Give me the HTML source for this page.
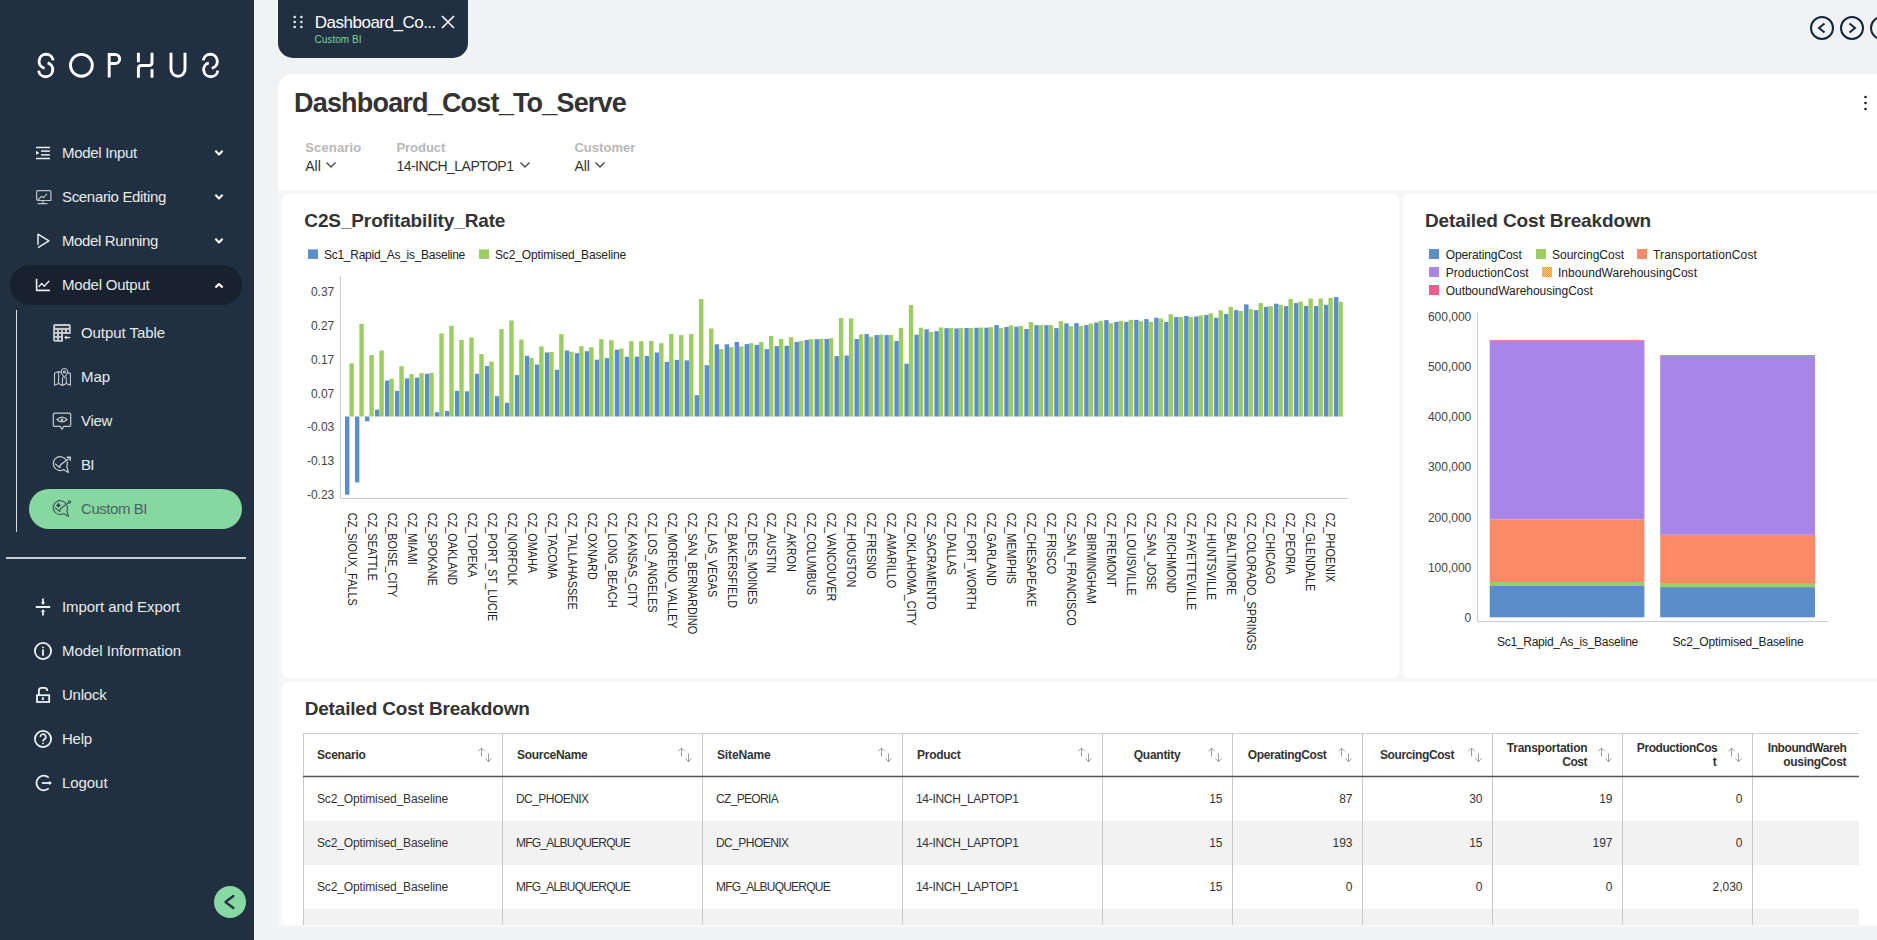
<!DOCTYPE html>
<html><head><meta charset="utf-8"><title>Dashboard_Cost_To_Serve</title>
<style>
html,body{margin:0;padding:0;}
body{width:1877px;height:940px;overflow:hidden;position:relative;background:#f1f2f4;font-family:"Liberation Sans",sans-serif;}
.t{position:absolute;white-space:nowrap;line-height:1;}
svg{overflow:visible}
</style></head><body>
<div style="position:absolute;left:0;top:0;width:254px;height:940px;background:#213040"></div><svg style="position:absolute;left:0;top:0" width="254" height="100" viewBox="0 0 254 100">
<g fill="none" stroke="#fff" stroke-width="2.9" stroke-linecap="butt">
<path d="M53.2,60.4 A7.1,7.1 0 1 0 44.6,68.3"/>
<path d="M38.6,70.6 A7.1,7.1 0 1 0 47.6,62.8"/>
<circle cx="81.4" cy="65.3" r="10.9"/>
<path d="M109.2,77.6 V54.5 H115.2 A4.5,4.5 0 0 1 115.2,63.5 H109.2"/>
<path d="M138.4,52.8 V62.2"/>
<path d="M152,52.8 V62.5 Q152,65.5 149,65.5 H141.4 Q138.4,65.5 138.4,68.5 V77.8"/>
<path d="M152,69.2 V77.8"/>
<path d="M171,52.8 V69.3 A7,7 0 0 0 185,69.3 V52.8"/>
<path d="M203.2,60.4 A7.1,7.1 0 1 1 211.8,68.3"/>
<path d="M217.8,70.6 A7.1,7.1 0 1 1 208.8,62.8"/>
</g></svg><div style="position:absolute;left:10px;top:265px;width:232px;height:40px;border-radius:20px;background:#17222e"></div><div style="position:absolute;left:29px;top:489px;width:213px;height:40px;border-radius:20px;background:#86d8a0"></div><div style="position:absolute;left:16px;top:310px;width:1px;height:222px;background:#d8dde2"></div><div style="position:absolute;left:6px;top:557px;width:240px;height:2px;background:#c9ced4"></div><div style="position:absolute;left:214px;top:886px;width:32px;height:32px;border-radius:16px;background:#86d9a2"></div><div class="t" style="left:62.0px;top:144.80px;font-size:15px;color:#e8ebee;letter-spacing:-0.310px;">Model Input</div><div class="t" style="left:62.0px;top:188.80px;font-size:15px;color:#e8ebee;letter-spacing:-0.327px;">Scenario Editing</div><div class="t" style="left:62.0px;top:232.80px;font-size:15px;color:#e8ebee;letter-spacing:-0.377px;">Model Running</div><div class="t" style="left:62.0px;top:276.80px;font-size:15px;color:#e8ebee;letter-spacing:-0.215px;">Model Output</div><div class="t" style="left:81.0px;top:325.30px;font-size:15px;color:#e8ebee;letter-spacing:-0.068px;">Output Table</div><div class="t" style="left:81.0px;top:369.30px;font-size:15px;color:#e8ebee;letter-spacing:-0.062px;">Map</div><div class="t" style="left:81.0px;top:413.30px;font-size:15px;color:#e8ebee;letter-spacing:-0.309px;">View</div><div class="t" style="left:81.0px;top:457.30px;font-size:15px;color:#e8ebee;letter-spacing:-0.836px;">BI</div><div class="t" style="left:81.0px;top:501.30px;font-size:15px;color:#4b6260;letter-spacing:-0.448px;">Custom BI</div><div class="t" style="left:62.0px;top:598.90px;font-size:15px;color:#e8ebee;letter-spacing:-0.074px;">Import and Export</div><div class="t" style="left:62.0px;top:642.90px;font-size:15px;color:#e8ebee;letter-spacing:-0.064px;">Model Information</div><div class="t" style="left:62.0px;top:686.90px;font-size:15px;color:#e8ebee;letter-spacing:-0.224px;">Unlock</div><div class="t" style="left:62.0px;top:730.90px;font-size:15px;color:#e8ebee;letter-spacing:-0.211px;">Help</div><div class="t" style="left:62.0px;top:774.70px;font-size:15px;color:#e8ebee;letter-spacing:-0.065px;">Logout</div><svg style="position:absolute;left:0;top:0" width="254" height="940"><g fill="none" stroke="#e9edf0" stroke-width="1.6" stroke-linecap="round" stroke-linejoin="round"><path d="M215.4,150.79999999999998 L219,154.4 L222.6,150.79999999999998" stroke-width="2.1" stroke-linecap="butt" stroke="#fff"/><path d="M215.4,194.79999999999998 L219,198.4 L222.6,194.79999999999998" stroke-width="2.1" stroke-linecap="butt" stroke="#fff"/><path d="M215.4,238.79999999999998 L219,242.4 L222.6,238.79999999999998" stroke-width="2.1" stroke-linecap="butt" stroke="#fff"/><path d="M215.4,287.6 L219,284.0 L222.6,287.6" stroke-width="2.1" stroke-linecap="butt" stroke="#fff"/><path d="M36,147.5 H50 M36,158.5 H50" stroke-width="1.7" stroke-linecap="butt"/><path d="M41,151.1 H49.9 M41,154.9 H49.9" stroke="#cfd3d6" stroke-width="1.7" stroke-linecap="butt"/><path d="M36,150.7 L39.4,152.9 L36,155.1 Z" fill="#e9edf0" stroke="none"/><g stroke="#bfc4c8" stroke-width="1.2"><path d="M37.5,190.6 H49.5 Q50.9,190.6 50.9,192 V200.5 H43 M43,200.5 V203.4 M38.1,203.6 H47"/><path d="M43,200.5 H38.4 Q36.6,200.5 36.6,198.7 V192 Q36.6,190.6 38,190.6"/><path d="M37.9,200 L41.4,196.3 L43.4,197.6 L46.7,194.2"/></g><path d="M38,244.7 V234.2 L48.9,240.9 L38,247.6" stroke-width="1.5" stroke-linecap="butt"/><path d="M36.6,278.8 V290.4 H49.9" stroke-width="1.6" stroke-linecap="butt"/><path d="M39,286.5 L41.8,283.4 L44.3,286.2 L48.9,281.3" stroke-width="1.4"/><path d="M55,324.1 H69 Q70.8,324.1 70.8,326 V333.9 H63 V341.7 H55 Q53.1,341.7 53.1,339.8 V326 Q53.1,324.1 55,324.1 Z" fill="#c6cacd" stroke="none"/><g fill="#1a2a3a" stroke="none"><rect x="55.1" y="326.1" width="13.8" height="1.7"/><rect x="54.9" y="330" width="2" height="2"/><rect x="59" y="330" width="2" height="2"/><rect x="62.9" y="330" width="2" height="2"/><rect x="67" y="330" width="2" height="2"/><rect x="54.9" y="333.9" width="2" height="2"/><rect x="59" y="333.9" width="2" height="2"/><rect x="54.9" y="337.9" width="2" height="2"/><rect x="59" y="337.9" width="2" height="2"/></g><path d="M64.8,337.5 H70.2" stroke-width="1.3" stroke-linecap="butt"/><path d="M66.6,335.5 L64.3,337.5 L66.6,339.5 Z" fill="#e9edf0" stroke="none"/><g stroke="#c4c8cb" stroke-width="1.1"><path d="M61.6,372.6 L58.6,371.6 L54.5,373.2 V385.2 L58.6,383.6 L62.5,385.5 L66.3,383.6 L70.4,385.2 V373.4 L67.3,372.6 M58.6,371.6 V383.6 M62.5,377.5 V385.5 M66.3,377.5 V383.6"/><path d="M64.4,377.8 L61.5,373.3 A3.3,3.3 0 1 1 67.3,373.3 Z"/><circle cx="64.4" cy="371.9" r="1"/></g><g stroke="#c8cccf" stroke-width="1.2"><path d="M54.6,413.1 H69.4 Q70.7,413.1 70.7,414.4 V425.1 Q70.7,426.4 69.4,426.4 H63.8 L62,429.2 L60.2,426.4 H54.6 Q53.3,426.4 53.3,425.1 V414.4 Q53.3,413.1 54.6,413.1 Z"/><path d="M57,419.5 Q62,414.8 67.1,419.5 Q62,424.2 57,419.5 Z" stroke-width="1.1"/></g><circle cx="62" cy="419.8" r="1.3" fill="#c8cccf" stroke="none"/><g stroke="#cdd1d4" stroke-width="1.2"><path d="M66.2,460.3 A6.9,6.9 0 1 0 63.6,469.6 L68.4,472.4 L66.9,466.6 A7,7 0 0 0 67.2,461.8"/><path d="M55.4,464 L59.8,467.6 L60.5,464.7 L68.6,458.8"/><path d="M67.2,457.3 H70.3 V460.2" stroke-width="1.4"/></g></g><g fill="none" stroke="#3f5b58" stroke-width="1.2" stroke-linecap="round" stroke-linejoin="round"><path d="M66.2,504.3 A6.9,6.9 0 1 0 63.6,513.6 L68.4,516.4 L66.9,510.6 A7,7 0 0 0 67.2,505.8"/><path d="M55.4,508 L59.8,511.6 L60.5,508.7 L68.6,502.8"/><circle cx="69.5" cy="501.9" r="1.1"/><path d="M58.4,503.3 Q58.4,505.4 56.3,505.4 Q58.4,505.4 58.4,507.5 Q58.4,505.4 60.5,505.4 Q58.4,505.4 58.4,503.3 Z" fill="#1a2a3a" stroke="#1a2a3a" stroke-width="0.6"/></g><g fill="none" stroke="#eef1f3" stroke-width="1.8" stroke-linecap="butt" stroke-linejoin="miter"><path d="M35.8,607 H50.2 M43,598.4 V603 M43,611.2 V615.6"/><path d="M40.8,602.2 H45.2 L43,605 Z M40.8,611.8 H45.2 L43,609.2 Z" fill="#eef1f3" stroke="none"/><circle cx="43" cy="651" r="8.1"/><path d="M43,649.6 V655.8 M43,646.7 V648.2"/><rect x="37" y="695.2" width="12.2" height="6.8"/><path d="M38.9,695 V690.5 Q38.9,687.9 41.5,687.9 H44.6 Q47.2,687.9 47.2,690.5 V691"/><path d="M42.85,697.2 V700" stroke-width="1.9"/><circle cx="43" cy="739" r="8.1"/><path d="M40.3,736.9 A2.75,2.75 0 1 1 44.4,739.3 Q43,740 43,741.6 M43,742.7 V744.2" stroke-width="1.6"/><path d="M48.7,777.6 A7.3,7.3 0 1 0 48.7,788.4"/><path d="M41.9,783 H49.3"/><path d="M49,780.9 L52,783 L49,785.1 Z" fill="#eef1f3" stroke="none"/></g><path d="M233.4,896 L225.4,902 L233.4,908" fill="none" stroke="#213040" stroke-width="2.2" stroke-linecap="round" stroke-linejoin="round"/></svg><div style="position:absolute;left:278px;top:-20px;width:190px;height:78px;border-radius:15px;background:#213040"></div><svg style="position:absolute;left:278px;top:0" width="190" height="58"><g fill="#e8ecef"><circle cx="16.7" cy="17" r="1.3"/><circle cx="23.4" cy="17" r="1.3"/><circle cx="16.7" cy="22" r="1.3"/><circle cx="23.4" cy="22" r="1.3"/><circle cx="16.7" cy="27" r="1.3"/><circle cx="23.4" cy="27" r="1.3"/></g><path d="M164,16 L176,28 M176,16 L164,28" stroke="#fff" stroke-width="1.6"/></svg><div class="t" style="left:314.8px;top:13.61px;font-size:17px;color:#ffffff;letter-spacing:-0.500px;">Dashboard_Co...</div><div class="t" style="left:314.5px;top:34.94px;font-size:10px;color:#7fd39a;letter-spacing:0.035px;">Custom BI</div><svg style="position:absolute;left:1800px;top:0" width="77" height="60"><g fill="none" stroke="#14263a" stroke-width="2"><circle cx="22" cy="28" r="11"/><path d="M24.5,23.5 L19,28 L24.5,32.5"/><circle cx="52" cy="28" r="11"/><path d="M49.5,23.5 L55,28 L49.5,32.5"/><circle cx="82" cy="28" r="11"/></g></svg><div style="position:absolute;left:278px;top:74px;width:1620px;height:853px;border-radius:15px 0 0 0;background:#f6f7f9"></div><div style="position:absolute;left:278px;top:74px;width:1620px;height:116px;border-radius:15px 0 0 0;background:#fff"></div><div class="t" style="left:294.0px;top:90.34px;font-size:27px;color:#333;font-weight:bold;letter-spacing:-0.811px;">Dashboard_Cost_To_Serve</div><div class="t" style="left:305.3px;top:141.00px;font-size:13px;color:#b8b8b8;font-weight:bold;letter-spacing:0.135px;">Scenario</div><div class="t" style="left:396.4px;top:141.00px;font-size:13px;color:#b8b8b8;font-weight:bold;letter-spacing:-0.016px;">Product</div><div class="t" style="left:574.4px;top:141.00px;font-size:13px;color:#b8b8b8;font-weight:bold;letter-spacing:0.039px;">Customer</div><div class="t" style="left:305.3px;top:158.85px;font-size:14px;color:#333;letter-spacing:-0.021px;">All</div><div class="t" style="left:396.4px;top:158.85px;font-size:14px;color:#333;letter-spacing:-0.533px;">14-INCH_LAPTOP1</div><div class="t" style="left:574.4px;top:158.85px;font-size:14px;color:#333;letter-spacing:-0.021px;">All</div><svg style="position:absolute;left:0;top:0" width="1877" height="190"><g fill="none" stroke="#444" stroke-width="1.3"><path d="M326.5,162.5 L331,167 L335.5,162.5"/><path d="M520.5,162.5 L525,167 L529.5,162.5"/><path d="M595.5,162.5 L600,167 L604.5,162.5"/></g><g fill="#222"><circle cx="1865.5" cy="97" r="1.3"/><circle cx="1865.5" cy="103" r="1.3"/><circle cx="1865.5" cy="109" r="1.3"/></g></svg><div style="position:absolute;left:282px;top:194px;width:1117px;height:484px;border-radius:6px;background:#fff"></div><div style="position:absolute;left:1403px;top:194px;width:500px;height:484px;border-radius:6px;background:#fff"></div><div style="position:absolute;left:282px;top:682px;width:1620px;height:243px;border-radius:6px;background:#fff"></div><div class="t" style="left:304.3px;top:210.92px;font-size:19px;color:#333;font-weight:bold;letter-spacing:-0.126px;">C2S_Profitability_Rate</div><div class="t" style="left:324.0px;top:249.04px;font-size:12px;color:#222;letter-spacing:-0.268px;">Sc1_Rapid_As_is_Baseline</div><div class="t" style="left:495.0px;top:249.04px;font-size:12px;color:#222;letter-spacing:-0.139px;">Sc2_Optimised_Baseline</div><svg style="position:absolute;left:0;top:0" width="1877" height="940"><rect x="308" y="249.4" width="10" height="9.5" fill="#5b8ec9"/><rect x="479" y="249.4" width="10" height="9.5" fill="#9bcd64"/><path d="M340.5,276 V498.5 H1348" fill="none" stroke="#ccc" stroke-width="1"/><rect x="345.00" y="416.5" width="4.4" height="78.2" fill="#5b8ec9"/><rect x="349.40" y="363.3" width="4.4" height="53.2" fill="#9bcd64"/><rect x="354.99" y="416.5" width="4.4" height="65.9" fill="#5b8ec9"/><rect x="359.39" y="323.8" width="4.4" height="92.7" fill="#9bcd64"/><rect x="364.98" y="416.5" width="4.4" height="4.8" fill="#5b8ec9"/><rect x="369.38" y="355.1" width="4.4" height="61.4" fill="#9bcd64"/><rect x="374.97" y="409.6" width="4.4" height="6.9" fill="#5b8ec9"/><rect x="379.37" y="350.5" width="4.4" height="66.0" fill="#9bcd64"/><rect x="384.96" y="380.5" width="4.4" height="36.0" fill="#5b8ec9"/><rect x="389.36" y="378.8" width="4.4" height="37.7" fill="#9bcd64"/><rect x="394.95" y="390.9" width="4.4" height="25.6" fill="#5b8ec9"/><rect x="399.35" y="366.2" width="4.4" height="50.3" fill="#9bcd64"/><rect x="404.94" y="378.4" width="4.4" height="38.1" fill="#5b8ec9"/><rect x="409.34" y="374.1" width="4.4" height="42.4" fill="#9bcd64"/><rect x="414.93" y="377.7" width="4.4" height="38.8" fill="#5b8ec9"/><rect x="419.33" y="373.1" width="4.4" height="43.4" fill="#9bcd64"/><rect x="424.92" y="373.8" width="4.4" height="42.7" fill="#5b8ec9"/><rect x="429.32" y="372.9" width="4.4" height="43.6" fill="#9bcd64"/><rect x="434.91" y="412.2" width="4.4" height="4.3" fill="#5b8ec9"/><rect x="439.31" y="333.4" width="4.4" height="83.1" fill="#9bcd64"/><rect x="444.90" y="411.0" width="4.4" height="5.5" fill="#5b8ec9"/><rect x="449.30" y="325.8" width="4.4" height="90.7" fill="#9bcd64"/><rect x="454.89" y="390.9" width="4.4" height="25.6" fill="#5b8ec9"/><rect x="459.29" y="340.0" width="4.4" height="76.5" fill="#9bcd64"/><rect x="464.88" y="391.3" width="4.4" height="25.2" fill="#5b8ec9"/><rect x="469.28" y="337.6" width="4.4" height="78.9" fill="#9bcd64"/><rect x="474.87" y="373.8" width="4.4" height="42.7" fill="#5b8ec9"/><rect x="479.27" y="354.1" width="4.4" height="62.4" fill="#9bcd64"/><rect x="484.86" y="366.0" width="4.4" height="50.5" fill="#5b8ec9"/><rect x="489.26" y="361.6" width="4.4" height="54.9" fill="#9bcd64"/><rect x="494.85" y="396.1" width="4.4" height="20.4" fill="#5b8ec9"/><rect x="499.25" y="329.1" width="4.4" height="87.4" fill="#9bcd64"/><rect x="504.84" y="402.8" width="4.4" height="13.7" fill="#5b8ec9"/><rect x="509.24" y="320.5" width="4.4" height="96.0" fill="#9bcd64"/><rect x="514.83" y="375.1" width="4.4" height="41.4" fill="#5b8ec9"/><rect x="519.23" y="339.5" width="4.4" height="77.0" fill="#9bcd64"/><rect x="524.82" y="355.8" width="4.4" height="60.7" fill="#5b8ec9"/><rect x="529.22" y="358.0" width="4.4" height="58.5" fill="#9bcd64"/><rect x="534.81" y="364.5" width="4.4" height="52.0" fill="#5b8ec9"/><rect x="539.21" y="346.4" width="4.4" height="70.1" fill="#9bcd64"/><rect x="544.80" y="352.5" width="4.4" height="64.0" fill="#5b8ec9"/><rect x="549.20" y="352.0" width="4.4" height="64.5" fill="#9bcd64"/><rect x="554.79" y="369.8" width="4.4" height="46.7" fill="#5b8ec9"/><rect x="559.19" y="334.1" width="4.4" height="82.4" fill="#9bcd64"/><rect x="564.78" y="350.5" width="4.4" height="66.0" fill="#5b8ec9"/><rect x="569.18" y="351.7" width="4.4" height="64.8" fill="#9bcd64"/><rect x="574.77" y="353.2" width="4.4" height="63.3" fill="#5b8ec9"/><rect x="579.17" y="346.2" width="4.4" height="70.3" fill="#9bcd64"/><rect x="584.76" y="351.2" width="4.4" height="65.3" fill="#5b8ec9"/><rect x="589.16" y="347.2" width="4.4" height="69.3" fill="#9bcd64"/><rect x="594.75" y="359.7" width="4.4" height="56.8" fill="#5b8ec9"/><rect x="599.15" y="339.2" width="4.4" height="77.3" fill="#9bcd64"/><rect x="604.74" y="358.1" width="4.4" height="58.4" fill="#5b8ec9"/><rect x="609.14" y="340.2" width="4.4" height="76.3" fill="#9bcd64"/><rect x="614.73" y="349.7" width="4.4" height="66.8" fill="#5b8ec9"/><rect x="619.13" y="348.5" width="4.4" height="68.0" fill="#9bcd64"/><rect x="624.72" y="356.8" width="4.4" height="59.7" fill="#5b8ec9"/><rect x="629.12" y="341.2" width="4.4" height="75.3" fill="#9bcd64"/><rect x="634.71" y="356.6" width="4.4" height="59.9" fill="#5b8ec9"/><rect x="639.11" y="341.2" width="4.4" height="75.3" fill="#9bcd64"/><rect x="644.70" y="356.0" width="4.4" height="60.5" fill="#5b8ec9"/><rect x="649.10" y="340.9" width="4.4" height="75.6" fill="#9bcd64"/><rect x="654.69" y="352.5" width="4.4" height="64.0" fill="#5b8ec9"/><rect x="659.09" y="343.2" width="4.4" height="73.3" fill="#9bcd64"/><rect x="664.68" y="361.9" width="4.4" height="54.6" fill="#5b8ec9"/><rect x="669.08" y="334.0" width="4.4" height="82.5" fill="#9bcd64"/><rect x="674.67" y="359.9" width="4.4" height="56.6" fill="#5b8ec9"/><rect x="679.07" y="335.1" width="4.4" height="81.4" fill="#9bcd64"/><rect x="684.66" y="360.4" width="4.4" height="56.1" fill="#5b8ec9"/><rect x="689.06" y="334.1" width="4.4" height="82.4" fill="#9bcd64"/><rect x="694.65" y="395.2" width="4.4" height="21.3" fill="#5b8ec9"/><rect x="699.05" y="299.1" width="4.4" height="117.4" fill="#9bcd64"/><rect x="704.64" y="365.2" width="4.4" height="51.3" fill="#5b8ec9"/><rect x="709.04" y="328.5" width="4.4" height="88.0" fill="#9bcd64"/><rect x="714.63" y="344.3" width="4.4" height="72.2" fill="#5b8ec9"/><rect x="719.03" y="349.1" width="4.4" height="67.4" fill="#9bcd64"/><rect x="724.62" y="344.3" width="4.4" height="72.2" fill="#5b8ec9"/><rect x="729.02" y="347.1" width="4.4" height="69.4" fill="#9bcd64"/><rect x="734.61" y="341.9" width="4.4" height="74.6" fill="#5b8ec9"/><rect x="739.01" y="346.4" width="4.4" height="70.1" fill="#9bcd64"/><rect x="744.60" y="344.1" width="4.4" height="72.4" fill="#5b8ec9"/><rect x="749.00" y="343.2" width="4.4" height="73.3" fill="#9bcd64"/><rect x="754.59" y="344.9" width="4.4" height="71.6" fill="#5b8ec9"/><rect x="758.99" y="342.0" width="4.4" height="74.5" fill="#9bcd64"/><rect x="764.58" y="349.1" width="4.4" height="67.4" fill="#5b8ec9"/><rect x="768.98" y="336.0" width="4.4" height="80.5" fill="#9bcd64"/><rect x="774.57" y="346.1" width="4.4" height="70.4" fill="#5b8ec9"/><rect x="778.97" y="339.0" width="4.4" height="77.5" fill="#9bcd64"/><rect x="784.56" y="345.8" width="4.4" height="70.7" fill="#5b8ec9"/><rect x="788.96" y="337.2" width="4.4" height="79.3" fill="#9bcd64"/><rect x="794.55" y="342.0" width="4.4" height="74.5" fill="#5b8ec9"/><rect x="798.95" y="341.0" width="4.4" height="75.5" fill="#9bcd64"/><rect x="804.54" y="340.0" width="4.4" height="76.5" fill="#5b8ec9"/><rect x="808.94" y="339.2" width="4.4" height="77.3" fill="#9bcd64"/><rect x="814.53" y="339.2" width="4.4" height="77.3" fill="#5b8ec9"/><rect x="818.93" y="338.9" width="4.4" height="77.6" fill="#9bcd64"/><rect x="824.52" y="339.0" width="4.4" height="77.5" fill="#5b8ec9"/><rect x="828.92" y="338.2" width="4.4" height="78.3" fill="#9bcd64"/><rect x="834.51" y="356.1" width="4.4" height="60.4" fill="#5b8ec9"/><rect x="838.91" y="318.0" width="4.4" height="98.5" fill="#9bcd64"/><rect x="844.50" y="355.5" width="4.4" height="61.0" fill="#5b8ec9"/><rect x="848.90" y="318.3" width="4.4" height="98.2" fill="#9bcd64"/><rect x="854.49" y="339.0" width="4.4" height="77.5" fill="#5b8ec9"/><rect x="858.89" y="334.3" width="4.4" height="82.2" fill="#9bcd64"/><rect x="864.48" y="334.1" width="4.4" height="82.4" fill="#5b8ec9"/><rect x="868.88" y="336.7" width="4.4" height="79.8" fill="#9bcd64"/><rect x="874.47" y="335.1" width="4.4" height="81.4" fill="#5b8ec9"/><rect x="878.87" y="334.6" width="4.4" height="81.9" fill="#9bcd64"/><rect x="884.46" y="335.1" width="4.4" height="81.4" fill="#5b8ec9"/><rect x="888.86" y="334.9" width="4.4" height="81.6" fill="#9bcd64"/><rect x="894.45" y="341.0" width="4.4" height="75.5" fill="#5b8ec9"/><rect x="898.85" y="328.1" width="4.4" height="88.4" fill="#9bcd64"/><rect x="904.44" y="363.7" width="4.4" height="52.8" fill="#5b8ec9"/><rect x="908.84" y="305.1" width="4.4" height="111.4" fill="#9bcd64"/><rect x="914.43" y="334.7" width="4.4" height="81.8" fill="#5b8ec9"/><rect x="918.83" y="327.7" width="4.4" height="88.8" fill="#9bcd64"/><rect x="924.42" y="329.3" width="4.4" height="87.2" fill="#5b8ec9"/><rect x="928.82" y="332.0" width="4.4" height="84.5" fill="#9bcd64"/><rect x="934.41" y="331.1" width="4.4" height="85.4" fill="#5b8ec9"/><rect x="938.81" y="327.5" width="4.4" height="89.0" fill="#9bcd64"/><rect x="944.40" y="328.2" width="4.4" height="88.3" fill="#5b8ec9"/><rect x="948.80" y="328.1" width="4.4" height="88.4" fill="#9bcd64"/><rect x="954.39" y="328.4" width="4.4" height="88.1" fill="#5b8ec9"/><rect x="958.79" y="328.1" width="4.4" height="88.4" fill="#9bcd64"/><rect x="964.38" y="328.0" width="4.4" height="88.5" fill="#5b8ec9"/><rect x="968.78" y="328.0" width="4.4" height="88.5" fill="#9bcd64"/><rect x="974.37" y="327.8" width="4.4" height="88.7" fill="#5b8ec9"/><rect x="978.77" y="327.5" width="4.4" height="89.0" fill="#9bcd64"/><rect x="984.36" y="327.7" width="4.4" height="88.8" fill="#5b8ec9"/><rect x="988.76" y="327.2" width="4.4" height="89.3" fill="#9bcd64"/><rect x="994.35" y="325.1" width="4.4" height="91.4" fill="#5b8ec9"/><rect x="998.75" y="328.0" width="4.4" height="88.5" fill="#9bcd64"/><rect x="1004.34" y="327.0" width="4.4" height="89.5" fill="#5b8ec9"/><rect x="1008.74" y="325.4" width="4.4" height="91.1" fill="#9bcd64"/><rect x="1014.33" y="326.7" width="4.4" height="89.8" fill="#5b8ec9"/><rect x="1018.73" y="326.0" width="4.4" height="90.5" fill="#9bcd64"/><rect x="1024.32" y="329.0" width="4.4" height="87.5" fill="#5b8ec9"/><rect x="1028.72" y="322.1" width="4.4" height="94.4" fill="#9bcd64"/><rect x="1034.31" y="325.2" width="4.4" height="91.3" fill="#5b8ec9"/><rect x="1038.71" y="325.2" width="4.4" height="91.3" fill="#9bcd64"/><rect x="1044.30" y="325.2" width="4.4" height="91.3" fill="#5b8ec9"/><rect x="1048.70" y="325.1" width="4.4" height="91.4" fill="#9bcd64"/><rect x="1054.29" y="328.1" width="4.4" height="88.4" fill="#5b8ec9"/><rect x="1058.69" y="321.1" width="4.4" height="95.4" fill="#9bcd64"/><rect x="1064.28" y="323.4" width="4.4" height="93.1" fill="#5b8ec9"/><rect x="1068.68" y="326.1" width="4.4" height="90.4" fill="#9bcd64"/><rect x="1074.27" y="323.1" width="4.4" height="93.4" fill="#5b8ec9"/><rect x="1078.67" y="326.0" width="4.4" height="90.5" fill="#9bcd64"/><rect x="1084.26" y="325.1" width="4.4" height="91.4" fill="#5b8ec9"/><rect x="1088.66" y="323.5" width="4.4" height="93.0" fill="#9bcd64"/><rect x="1094.25" y="322.5" width="4.4" height="94.0" fill="#5b8ec9"/><rect x="1098.65" y="320.8" width="4.4" height="95.7" fill="#9bcd64"/><rect x="1104.24" y="320.1" width="4.4" height="96.4" fill="#5b8ec9"/><rect x="1108.64" y="323.1" width="4.4" height="93.4" fill="#9bcd64"/><rect x="1114.23" y="321.9" width="4.4" height="94.6" fill="#5b8ec9"/><rect x="1118.63" y="320.9" width="4.4" height="95.6" fill="#9bcd64"/><rect x="1124.22" y="321.9" width="4.4" height="94.6" fill="#5b8ec9"/><rect x="1128.62" y="319.9" width="4.4" height="96.6" fill="#9bcd64"/><rect x="1134.21" y="319.9" width="4.4" height="96.6" fill="#5b8ec9"/><rect x="1138.61" y="321.2" width="4.4" height="95.3" fill="#9bcd64"/><rect x="1144.20" y="319.1" width="4.4" height="97.4" fill="#5b8ec9"/><rect x="1148.60" y="321.8" width="4.4" height="94.7" fill="#9bcd64"/><rect x="1154.19" y="317.8" width="4.4" height="98.7" fill="#5b8ec9"/><rect x="1158.59" y="318.6" width="4.4" height="97.9" fill="#9bcd64"/><rect x="1164.18" y="321.8" width="4.4" height="94.7" fill="#5b8ec9"/><rect x="1168.58" y="314.3" width="4.4" height="102.2" fill="#9bcd64"/><rect x="1174.17" y="317.0" width="4.4" height="99.5" fill="#5b8ec9"/><rect x="1178.57" y="317.0" width="4.4" height="99.5" fill="#9bcd64"/><rect x="1184.16" y="315.9" width="4.4" height="100.6" fill="#5b8ec9"/><rect x="1188.56" y="316.9" width="4.4" height="99.6" fill="#9bcd64"/><rect x="1194.15" y="316.5" width="4.4" height="100.0" fill="#5b8ec9"/><rect x="1198.55" y="315.5" width="4.4" height="101.0" fill="#9bcd64"/><rect x="1204.14" y="315.0" width="4.4" height="101.5" fill="#5b8ec9"/><rect x="1208.54" y="313.3" width="4.4" height="103.2" fill="#9bcd64"/><rect x="1214.13" y="317.8" width="4.4" height="98.7" fill="#5b8ec9"/><rect x="1218.53" y="310.3" width="4.4" height="106.2" fill="#9bcd64"/><rect x="1224.12" y="314.0" width="4.4" height="102.5" fill="#5b8ec9"/><rect x="1228.52" y="307.0" width="4.4" height="109.5" fill="#9bcd64"/><rect x="1234.11" y="310.1" width="4.4" height="106.4" fill="#5b8ec9"/><rect x="1238.51" y="311.0" width="4.4" height="105.5" fill="#9bcd64"/><rect x="1244.10" y="304.4" width="4.4" height="112.1" fill="#5b8ec9"/><rect x="1248.50" y="309.1" width="4.4" height="107.4" fill="#9bcd64"/><rect x="1254.09" y="310.1" width="4.4" height="106.4" fill="#5b8ec9"/><rect x="1258.49" y="303.1" width="4.4" height="113.4" fill="#9bcd64"/><rect x="1264.08" y="306.8" width="4.4" height="109.7" fill="#5b8ec9"/><rect x="1268.48" y="306.1" width="4.4" height="110.4" fill="#9bcd64"/><rect x="1274.07" y="303.7" width="4.4" height="112.8" fill="#5b8ec9"/><rect x="1278.47" y="304.8" width="4.4" height="111.7" fill="#9bcd64"/><rect x="1284.06" y="306.1" width="4.4" height="110.4" fill="#5b8ec9"/><rect x="1288.46" y="299.1" width="4.4" height="117.4" fill="#9bcd64"/><rect x="1294.05" y="303.1" width="4.4" height="113.4" fill="#5b8ec9"/><rect x="1298.45" y="301.5" width="4.4" height="115.0" fill="#9bcd64"/><rect x="1304.04" y="306.0" width="4.4" height="110.5" fill="#5b8ec9"/><rect x="1308.44" y="298.6" width="4.4" height="117.9" fill="#9bcd64"/><rect x="1314.03" y="306.0" width="4.4" height="110.5" fill="#5b8ec9"/><rect x="1318.43" y="298.6" width="4.4" height="117.9" fill="#9bcd64"/><rect x="1324.02" y="304.8" width="4.4" height="111.7" fill="#5b8ec9"/><rect x="1328.42" y="297.9" width="4.4" height="118.6" fill="#9bcd64"/><rect x="1334.01" y="297.1" width="4.4" height="119.4" fill="#5b8ec9"/><rect x="1338.41" y="301.7" width="4.4" height="114.8" fill="#9bcd64"/><g font-family="Liberation Sans" font-size="12" fill="#444" text-anchor="end"><text x="334.3" y="296.2">0.37</text><text x="334.3" y="330.0">0.27</text><text x="334.3" y="363.9">0.17</text><text x="334.3" y="397.7">0.07</text><text x="334.3" y="431.4">-0.03</text><text x="334.3" y="465.2">-0.13</text><text x="334.3" y="498.9">-0.23</text></g><g font-family="Liberation Sans" font-size="12" fill="#222"><text transform="translate(348.30,512.8) rotate(90)" textLength="92.9" lengthAdjust="spacingAndGlyphs">CZ_SIOUX_FALLS</text><text transform="translate(368.26,512.8) rotate(90)" textLength="68.0" lengthAdjust="spacingAndGlyphs">CZ_SEATTLE</text><text transform="translate(388.22,512.8) rotate(90)" textLength="84.5" lengthAdjust="spacingAndGlyphs">CZ_BOISE_CITY</text><text transform="translate(408.18,512.8) rotate(90)" textLength="51.9" lengthAdjust="spacingAndGlyphs">CZ_MIAMI</text><text transform="translate(428.14,512.8) rotate(90)" textLength="73.0" lengthAdjust="spacingAndGlyphs">CZ_SPOKANE</text><text transform="translate(448.10,512.8) rotate(90)" textLength="72.4" lengthAdjust="spacingAndGlyphs">CZ_OAKLAND</text><text transform="translate(468.06,512.8) rotate(90)" textLength="64.4" lengthAdjust="spacingAndGlyphs">CZ_TOPEKA</text><text transform="translate(488.02,512.8) rotate(90)" textLength="108.4" lengthAdjust="spacingAndGlyphs">CZ_PORT_ST_LUCIE</text><text transform="translate(507.98,512.8) rotate(90)" textLength="73.0" lengthAdjust="spacingAndGlyphs">CZ_NORFOLK</text><text transform="translate(527.94,512.8) rotate(90)" textLength="60.3" lengthAdjust="spacingAndGlyphs">CZ_OMAHA</text><text transform="translate(547.90,512.8) rotate(90)" textLength="66.2" lengthAdjust="spacingAndGlyphs">CZ_TACOMA</text><text transform="translate(567.86,512.8) rotate(90)" textLength="96.9" lengthAdjust="spacingAndGlyphs">CZ_TALLAHASSEE</text><text transform="translate(587.82,512.8) rotate(90)" textLength="67.0" lengthAdjust="spacingAndGlyphs">CZ_OXNARD</text><text transform="translate(607.78,512.8) rotate(90)" textLength="94.7" lengthAdjust="spacingAndGlyphs">CZ_LONG_BEACH</text><text transform="translate(627.74,512.8) rotate(90)" textLength="95.3" lengthAdjust="spacingAndGlyphs">CZ_KANSAS_CITY</text><text transform="translate(647.70,512.8) rotate(90)" textLength="99.6" lengthAdjust="spacingAndGlyphs">CZ_LOS_ANGELES</text><text transform="translate(667.66,512.8) rotate(90)" textLength="115.7" lengthAdjust="spacingAndGlyphs">CZ_MORENO_VALLEY</text><text transform="translate(687.62,512.8) rotate(90)" textLength="121.3" lengthAdjust="spacingAndGlyphs">CZ_SAN_BERNARDINO</text><text transform="translate(707.58,512.8) rotate(90)" textLength="84.5" lengthAdjust="spacingAndGlyphs">CZ_LAS_VEGAS</text><text transform="translate(727.54,512.8) rotate(90)" textLength="95.3" lengthAdjust="spacingAndGlyphs">CZ_BAKERSFIELD</text><text transform="translate(747.50,512.8) rotate(90)" textLength="91.7" lengthAdjust="spacingAndGlyphs">CZ_DES_MOINES</text><text transform="translate(767.46,512.8) rotate(90)" textLength="60.3" lengthAdjust="spacingAndGlyphs">CZ_AUSTIN</text><text transform="translate(787.42,512.8) rotate(90)" textLength="59.1" lengthAdjust="spacingAndGlyphs">CZ_AKRON</text><text transform="translate(807.38,512.8) rotate(90)" textLength="82.1" lengthAdjust="spacingAndGlyphs">CZ_COLUMBUS</text><text transform="translate(827.34,512.8) rotate(90)" textLength="88.5" lengthAdjust="spacingAndGlyphs">CZ_VANCOUVER</text><text transform="translate(847.30,512.8) rotate(90)" textLength="74.6" lengthAdjust="spacingAndGlyphs">CZ_HOUSTON</text><text transform="translate(867.26,512.8) rotate(90)" textLength="65.8" lengthAdjust="spacingAndGlyphs">CZ_FRESNO</text><text transform="translate(887.22,512.8) rotate(90)" textLength="75.4" lengthAdjust="spacingAndGlyphs">CZ_AMARILLO</text><text transform="translate(907.18,512.8) rotate(90)" textLength="112.8" lengthAdjust="spacingAndGlyphs">CZ_OKLAHOMA_CITY</text><text transform="translate(927.14,512.8) rotate(90)" textLength="96.9" lengthAdjust="spacingAndGlyphs">CZ_SACRAMENTO</text><text transform="translate(947.10,512.8) rotate(90)" textLength="62.2" lengthAdjust="spacingAndGlyphs">CZ_DALLAS</text><text transform="translate(967.06,512.8) rotate(90)" textLength="96.7" lengthAdjust="spacingAndGlyphs">CZ_FORT_WORTH</text><text transform="translate(987.02,512.8) rotate(90)" textLength="73.0" lengthAdjust="spacingAndGlyphs">CZ_GARLAND</text><text transform="translate(1006.98,512.8) rotate(90)" textLength="71.2" lengthAdjust="spacingAndGlyphs">CZ_MEMPHIS</text><text transform="translate(1026.94,512.8) rotate(90)" textLength="94.1" lengthAdjust="spacingAndGlyphs">CZ_CHESAPEAKE</text><text transform="translate(1046.90,512.8) rotate(90)" textLength="61.5" lengthAdjust="spacingAndGlyphs">CZ_FRISCO</text><text transform="translate(1066.86,512.8) rotate(90)" textLength="112.8" lengthAdjust="spacingAndGlyphs">CZ_SAN_FRANCISCO</text><text transform="translate(1086.82,512.8) rotate(90)" textLength="91.1" lengthAdjust="spacingAndGlyphs">CZ_BIRMINGHAM</text><text transform="translate(1106.78,512.8) rotate(90)" textLength="74.2" lengthAdjust="spacingAndGlyphs">CZ_FREMONT</text><text transform="translate(1126.74,512.8) rotate(90)" textLength="82.7" lengthAdjust="spacingAndGlyphs">CZ_LOUISVILLE</text><text transform="translate(1146.70,512.8) rotate(90)" textLength="77.2" lengthAdjust="spacingAndGlyphs">CZ_SAN_JOSE</text><text transform="translate(1166.66,512.8) rotate(90)" textLength="80.3" lengthAdjust="spacingAndGlyphs">CZ_RICHMOND</text><text transform="translate(1186.62,512.8) rotate(90)" textLength="97.5" lengthAdjust="spacingAndGlyphs">CZ_FAYETTEVILLE</text><text transform="translate(1206.58,512.8) rotate(90)" textLength="87.5" lengthAdjust="spacingAndGlyphs">CZ_HUNTSVILLE</text><text transform="translate(1226.54,512.8) rotate(90)" textLength="82.5" lengthAdjust="spacingAndGlyphs">CZ_BALTIMORE</text><text transform="translate(1246.50,512.8) rotate(90)" textLength="137.6" lengthAdjust="spacingAndGlyphs">CZ_COLORADO_SPRINGS</text><text transform="translate(1266.46,512.8) rotate(90)" textLength="71.2" lengthAdjust="spacingAndGlyphs">CZ_CHICAGO</text><text transform="translate(1286.42,512.8) rotate(90)" textLength="61.5" lengthAdjust="spacingAndGlyphs">CZ_PEORIA</text><text transform="translate(1306.38,512.8) rotate(90)" textLength="78.5" lengthAdjust="spacingAndGlyphs">CZ_GLENDALE</text><text transform="translate(1326.34,512.8) rotate(90)" textLength="69.4" lengthAdjust="spacingAndGlyphs">CZ_PHOENIX</text></g><path d="M1477.5,312 V621.5 H1828" fill="none" stroke="#ccc" stroke-width="1"/><rect x="1489.7" y="586" width="154.7" height="31.3" fill="#5b8ec9"/><rect x="1489.7" y="582" width="154.7" height="4.0" fill="#9bcd64"/><rect x="1489.7" y="519.6" width="154.7" height="62.4" fill="#fd8a66"/><rect x="1489.7" y="341" width="154.7" height="178.6" fill="#a886e8"/><rect x="1489.7" y="340" width="154.7" height="1.2" fill="#f0808a"/><rect x="1660.2" y="587.1" width="154.8" height="30.2" fill="#5b8ec9"/><rect x="1660.2" y="583" width="154.8" height="4.1" fill="#9bcd64"/><rect x="1660.2" y="534.8" width="154.8" height="48.2" fill="#fd8a66"/><rect x="1660.2" y="356" width="154.8" height="178.8" fill="#a886e8"/><rect x="1660.2" y="355" width="154.8" height="1.2" fill="#f0808a"/><g font-family="Liberation Sans" font-size="12" fill="#444" text-anchor="end"><text x="1471.3" y="320.9">600,000</text><text x="1471.3" y="371.0">500,000</text><text x="1471.3" y="421.2">400,000</text><text x="1471.3" y="471.3">300,000</text><text x="1471.3" y="521.5">200,000</text><text x="1471.3" y="571.6">100,000</text><text x="1471.3" y="621.8">0</text></g><defs><pattern id="hp" width="2" height="2" patternUnits="userSpaceOnUse"><rect width="2" height="2" fill="#f0c89a"/><rect width="1" height="1" fill="#e09a48"/><rect x="1" y="1" width="1" height="1" fill="#e09a48"/></pattern></defs><rect x="1429" y="249" width="10" height="10" fill="#5b8ec9"/><rect x="1536" y="249" width="10" height="10" fill="#9bcd64"/><rect x="1637" y="249" width="10" height="10" fill="#fd8a66"/><rect x="1429" y="267" width="10" height="10" fill="#a886e8"/><rect x="1429" y="285" width="10" height="10" fill="#ee5b8e"/><rect x="1542" y="267" width="10" height="10" fill="url(#hp)"/></svg><div class="t" style="left:1425.0px;top:210.92px;font-size:19px;color:#333;font-weight:bold;letter-spacing:-0.135px;">Detailed Cost Breakdown</div><div class="t" style="left:1445.7px;top:249.04px;font-size:12px;color:#222;letter-spacing:-0.105px;">OperatingCost</div><div class="t" style="left:1552.0px;top:249.04px;font-size:12px;color:#222;letter-spacing:-0.003px;">SourcingCost</div><div class="t" style="left:1653.0px;top:249.04px;font-size:12px;color:#222;letter-spacing:0.134px;">TransportationCost</div><div class="t" style="left:1445.7px;top:267.04px;font-size:12px;color:#222;letter-spacing:0.069px;">ProductionCost</div><div class="t" style="left:1558.0px;top:267.04px;font-size:12px;color:#222;letter-spacing:0.032px;">InboundWarehousingCost</div><div class="t" style="left:1445.7px;top:285.04px;font-size:12px;color:#222;letter-spacing:-0.027px;">OutboundWarehousingCost</div><div class="t" style="left:1497.0px;top:635.54px;font-size:12px;color:#222;letter-spacing:-0.268px;">Sc1_Rapid_As_is_Baseline</div><div class="t" style="left:1672.5px;top:635.54px;font-size:12px;color:#222;letter-spacing:-0.139px;">Sc2_Optimised_Baseline</div><div class="t" style="left:304.7px;top:698.92px;font-size:19px;color:#333;font-weight:bold;letter-spacing:-0.178px;">Detailed Cost Breakdown</div><svg style="position:absolute;left:0;top:0" width="1877" height="940"><rect x="303" y="821" width="1556" height="44" fill="#f2f2f2"/><rect x="303" y="909" width="1556" height="16" fill="#f2f2f2"/><path d="M303,733.5 H1859" stroke="#d0d0d0" stroke-width="1"/><path d="M303.5,733 V925" stroke="#c8c8c8" stroke-width="1"/><path d="M502.5,733 V925" stroke="#c8c8c8" stroke-width="1"/><path d="M702.5,733 V925" stroke="#c8c8c8" stroke-width="1"/><path d="M902.5,733 V925" stroke="#c8c8c8" stroke-width="1"/><path d="M1102.5,733 V925" stroke="#c8c8c8" stroke-width="1"/><path d="M1232.5,733 V925" stroke="#c8c8c8" stroke-width="1"/><path d="M1362.5,733 V925" stroke="#c8c8c8" stroke-width="1"/><path d="M1492.5,733 V925" stroke="#c8c8c8" stroke-width="1"/><path d="M1622.5,733 V925" stroke="#c8c8c8" stroke-width="1"/><path d="M1752.5,733 V925" stroke="#c8c8c8" stroke-width="1"/><path d="M303,776.5 H1859" stroke="#555" stroke-width="1.6"/><path d="M481.5,748.1 V756.3 M478.3,751.4 L481.5,748.1 L484.8,751.4 M488.5,753.4 V761.7 M485.2,758.4 L488.5,761.7 L491.8,758.4" fill="none" stroke="#9a9a9a" stroke-width="1"/><path d="M681.5,748.1 V756.3 M678.3,751.4 L681.5,748.1 L684.8,751.4 M688.5,753.4 V761.7 M685.2,758.4 L688.5,761.7 L691.8,758.4" fill="none" stroke="#9a9a9a" stroke-width="1"/><path d="M881.5,748.1 V756.3 M878.3,751.4 L881.5,748.1 L884.8,751.4 M888.5,753.4 V761.7 M885.2,758.4 L888.5,761.7 L891.8,758.4" fill="none" stroke="#9a9a9a" stroke-width="1"/><path d="M1081.5,748.1 V756.3 M1078.3,751.4 L1081.5,748.1 L1084.8,751.4 M1088.5,753.4 V761.7 M1085.2,758.4 L1088.5,761.7 L1091.8,758.4" fill="none" stroke="#9a9a9a" stroke-width="1"/><path d="M1211.5,748.1 V756.3 M1208.3,751.4 L1211.5,748.1 L1214.8,751.4 M1218.5,753.4 V761.7 M1215.2,758.4 L1218.5,761.7 L1221.8,758.4" fill="none" stroke="#9a9a9a" stroke-width="1"/><path d="M1341.5,748.1 V756.3 M1338.3,751.4 L1341.5,748.1 L1344.8,751.4 M1348.5,753.4 V761.7 M1345.2,758.4 L1348.5,761.7 L1351.8,758.4" fill="none" stroke="#9a9a9a" stroke-width="1"/><path d="M1471.5,748.1 V756.3 M1468.3,751.4 L1471.5,748.1 L1474.8,751.4 M1478.5,753.4 V761.7 M1475.2,758.4 L1478.5,761.7 L1481.8,758.4" fill="none" stroke="#9a9a9a" stroke-width="1"/><path d="M1601.5,748.1 V756.3 M1598.3,751.4 L1601.5,748.1 L1604.8,751.4 M1608.5,753.4 V761.7 M1605.2,758.4 L1608.5,761.7 L1611.8,758.4" fill="none" stroke="#9a9a9a" stroke-width="1"/><path d="M1731.5,748.1 V756.3 M1728.3,751.4 L1731.5,748.1 L1734.8,751.4 M1738.5,753.4 V761.7 M1735.2,758.4 L1738.5,761.7 L1741.8,758.4" fill="none" stroke="#9a9a9a" stroke-width="1"/></svg><div class="t" style="left:317.0px;top:748.64px;font-size:12px;color:#333;font-weight:bold;letter-spacing:-0.271px;">Scenario</div><div class="t" style="left:517.0px;top:748.64px;font-size:12px;color:#333;font-weight:bold;letter-spacing:-0.286px;">SourceName</div><div class="t" style="left:717.0px;top:748.64px;font-size:12px;color:#333;font-weight:bold;letter-spacing:-0.148px;">SiteName</div><div class="t" style="left:917.0px;top:748.64px;font-size:12px;color:#333;font-weight:bold;letter-spacing:-0.261px;">Product</div><div class="t" style="left:1133.8px;top:748.64px;font-size:12px;color:#333;font-weight:bold;letter-spacing:-0.270px;">Quantity</div><div class="t" style="left:1247.8px;top:748.64px;font-size:12px;color:#333;font-weight:bold;letter-spacing:-0.371px;">OperatingCost</div><div class="t" style="left:1380.0px;top:748.64px;font-size:12px;color:#333;font-weight:bold;letter-spacing:-0.388px;">SourcingCost</div><div class="t" style="left:1506.8px;top:741.94px;font-size:12px;color:#333;font-weight:bold;letter-spacing:-0.250px;">Transportation</div><div class="t" style="left:1562.2px;top:755.74px;font-size:12px;color:#333;font-weight:bold;letter-spacing:-0.418px;">Cost</div><div class="t" style="left:1636.8px;top:741.94px;font-size:12px;color:#333;font-weight:bold;letter-spacing:-0.422px;">ProductionCos</div><div class="t" style="left:1712.8px;top:755.74px;font-size:12px;color:#333;font-weight:bold;letter-spacing:0.500px;">t</div><div class="t" style="left:1767.8px;top:741.94px;font-size:12px;color:#333;font-weight:bold;letter-spacing:-0.419px;">InboundWareh</div><div class="t" style="left:1783.2px;top:755.74px;font-size:12px;color:#333;font-weight:bold;letter-spacing:-0.298px;">ousingCost</div><div class="t" style="left:317.0px;top:793.04px;font-size:12px;color:#333;letter-spacing:-0.139px;">Sc2_Optimised_Baseline</div><div class="t" style="left:516.0px;top:793.04px;font-size:12px;color:#333;letter-spacing:-0.552px;">DC_PHOENIX</div><div class="t" style="left:716.0px;top:793.04px;font-size:12px;color:#333;letter-spacing:-0.667px;">CZ_PEORIA</div><div class="t" style="left:916.0px;top:793.04px;font-size:12px;color:#333;letter-spacing:-0.309px;">14-INCH_LAPTOP1</div><div class="t" style="right:654.5px;top:793.04px;font-size:12px;color:#333;">15</div><div class="t" style="right:524.5px;top:793.04px;font-size:12px;color:#333;">87</div><div class="t" style="right:394.5px;top:793.04px;font-size:12px;color:#333;">30</div><div class="t" style="right:264.5px;top:793.04px;font-size:12px;color:#333;">19</div><div class="t" style="right:134.5px;top:793.04px;font-size:12px;color:#333;">0</div><div class="t" style="left:317.0px;top:837.04px;font-size:12px;color:#333;letter-spacing:-0.139px;">Sc2_Optimised_Baseline</div><div class="t" style="left:516.0px;top:837.04px;font-size:12px;color:#333;letter-spacing:-0.756px;">MFG_ALBUQUERQUE</div><div class="t" style="left:716.0px;top:837.04px;font-size:12px;color:#333;letter-spacing:-0.552px;">DC_PHOENIX</div><div class="t" style="left:916.0px;top:837.04px;font-size:12px;color:#333;letter-spacing:-0.309px;">14-INCH_LAPTOP1</div><div class="t" style="right:654.5px;top:837.04px;font-size:12px;color:#333;">15</div><div class="t" style="right:524.5px;top:837.04px;font-size:12px;color:#333;">193</div><div class="t" style="right:394.5px;top:837.04px;font-size:12px;color:#333;">15</div><div class="t" style="right:264.5px;top:837.04px;font-size:12px;color:#333;">197</div><div class="t" style="right:134.5px;top:837.04px;font-size:12px;color:#333;">0</div><div class="t" style="left:317.0px;top:881.04px;font-size:12px;color:#333;letter-spacing:-0.139px;">Sc2_Optimised_Baseline</div><div class="t" style="left:516.0px;top:881.04px;font-size:12px;color:#333;letter-spacing:-0.756px;">MFG_ALBUQUERQUE</div><div class="t" style="left:716.0px;top:881.04px;font-size:12px;color:#333;letter-spacing:-0.756px;">MFG_ALBUQUERQUE</div><div class="t" style="left:916.0px;top:881.04px;font-size:12px;color:#333;letter-spacing:-0.309px;">14-INCH_LAPTOP1</div><div class="t" style="right:654.5px;top:881.04px;font-size:12px;color:#333;">15</div><div class="t" style="right:524.5px;top:881.04px;font-size:12px;color:#333;">0</div><div class="t" style="right:394.5px;top:881.04px;font-size:12px;color:#333;">0</div><div class="t" style="right:264.5px;top:881.04px;font-size:12px;color:#333;">0</div><div class="t" style="right:134.5px;top:881.04px;font-size:12px;color:#333;">2,030</div>
</body></html>
